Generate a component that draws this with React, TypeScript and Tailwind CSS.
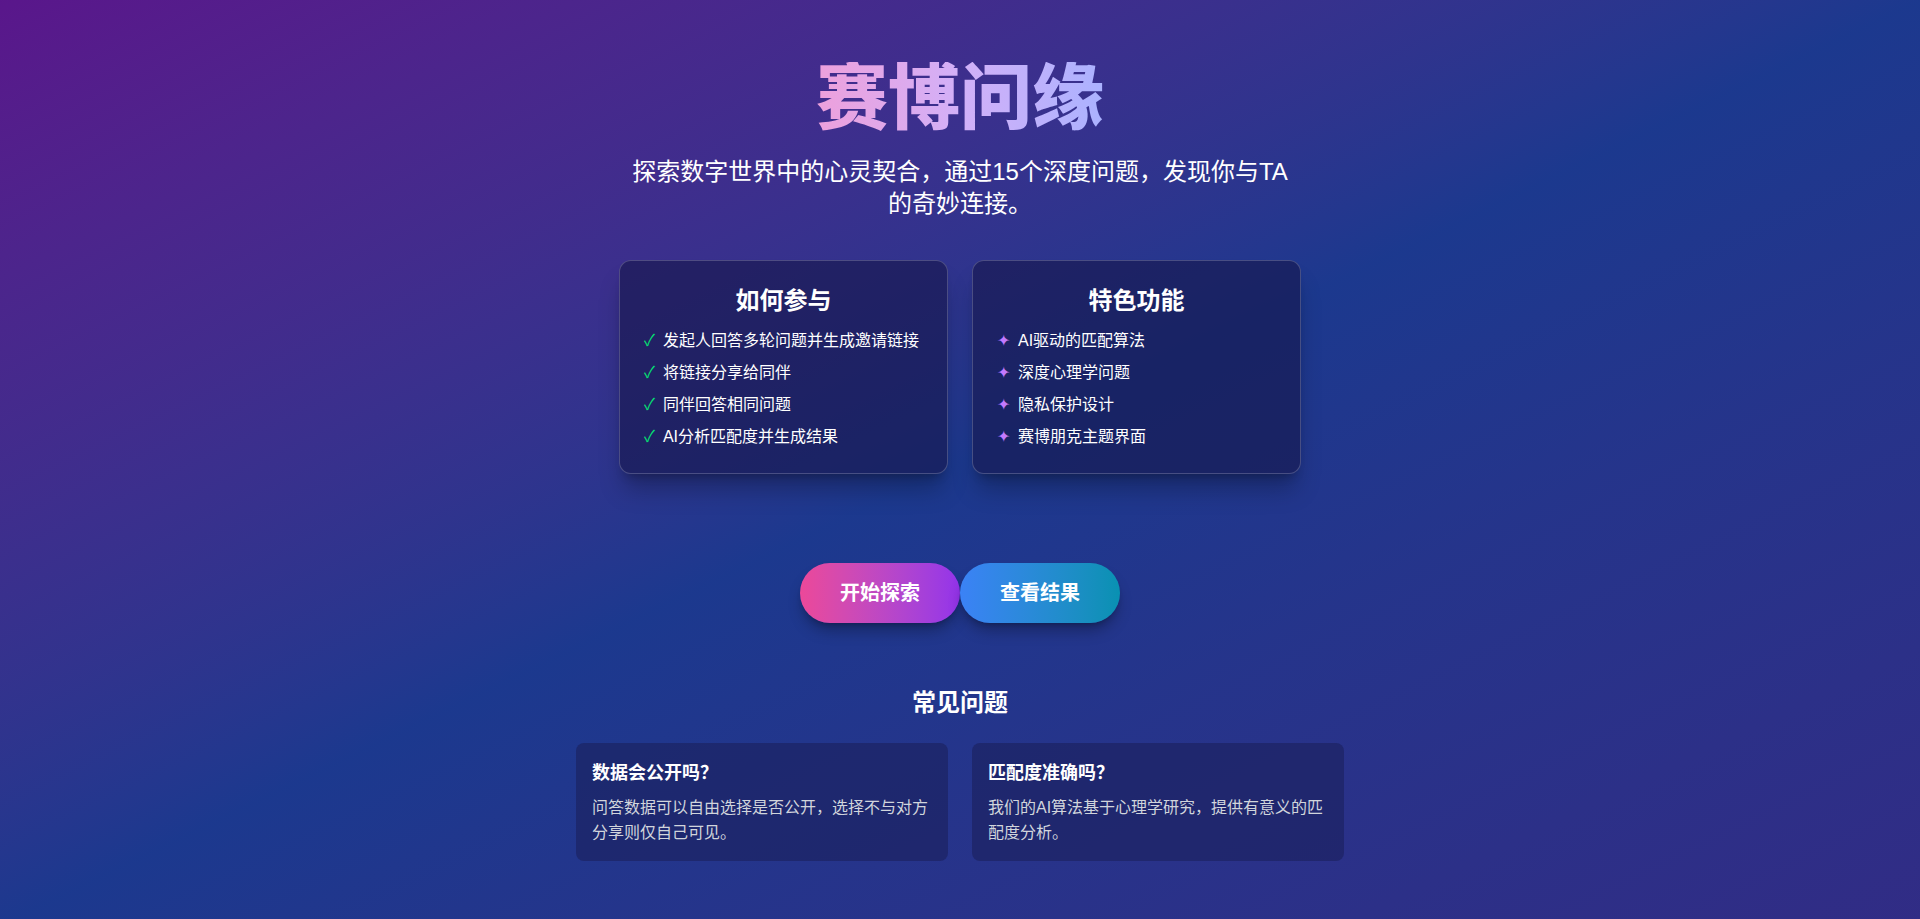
import React from 'react';

const steps = ['发起人回答多轮问题并生成邀请链接', '将链接分享给同伴', '同伴回答相同问题', 'AI分析匹配度并生成结果'];
const features = ['AI驱动的匹配算法', '深度心理学问题', '隐私保护设计', '赛博朋克主题界面'];
const faqs = [
  { q: '数据会公开吗？', a: '问答数据可以自由选择是否公开，选择不与对方分享则仅自己可见。' },
  { q: '匹配度准确吗？', a: '我们的AI算法基于心理学研究，提供有意义的匹配度分析。' },
];

const App = () => {
  return (
    <div
      className="min-h-screen w-full bg-linear-to-br from-purple-900 via-blue-900 to-indigo-900 text-white flex flex-col items-center pt-[62px] pb-16"
      style={{ fontFamily: '"Liberation Sans", "Noto Sans CJK SC", sans-serif' }}
    >
      <h1 className="text-7xl font-black leading-none bg-linear-to-r from-[#eda0dc] via-[#d2b0f8] to-[#aab2ff] bg-clip-text text-transparent">
        赛博问缘
      </h1>
      <p className="mt-[22px] max-w-2xl text-center text-2xl text-white">
        探索数字世界中的心灵契合，通过15个深度问题，发现你与TA的奇妙连接。
      </p>

      {/* Info cards */}
      <div className="mt-10 flex gap-6">
        <div className="w-[329px] rounded-xl border border-white/20 bg-[#15154a]/60 p-6 shadow-xl shadow-black/25">
          <h2 className="mb-3 text-center text-2xl font-bold">如何参与</h2>
          <ul className="space-y-2">
            {steps.map((s) => (
              <li key={s} className="flex items-center gap-2 text-base leading-6">
                <span className="text-green-400">✓</span>
                <span>{s}</span>
              </li>
            ))}
          </ul>
        </div>
        <div className="w-[329px] rounded-xl border border-white/20 bg-[#15154a]/60 p-6 shadow-xl shadow-black/25">
          <h2 className="mb-3 text-center text-2xl font-bold">特色功能</h2>
          <ul className="space-y-2">
            {features.map((s) => (
              <li key={s} className="flex items-center gap-2 text-base leading-6">
                <span className="text-purple-400">✦</span>
                <span>{s}</span>
              </li>
            ))}
          </ul>
        </div>
      </div>

      {/* Actions */}
      <div className="mt-[89px] flex">
        <button className="rounded-full bg-linear-to-r from-[#ec4899] to-[#9333ea] px-10 py-4 text-xl font-bold shadow-lg shadow-black/30">
          开始探索
        </button>
        <button className="rounded-full bg-linear-to-r from-[#3b82f6] to-[#0891b2] px-10 py-4 text-xl font-bold shadow-lg shadow-black/30">
          查看结果
        </button>
      </div>

      {/* FAQ */}
      <h2 className="mt-16 mb-6 text-2xl font-bold">常见问题</h2>
      <div className="grid w-full max-w-3xl grid-cols-2 gap-6">
        {faqs.map((f) => (
          <div key={f.q} className="rounded-lg bg-[#1a1f5c]/60 p-4">
            <h3 className="mb-2 text-lg font-bold">{f.q}</h3>
            <p className="text-base leading-[25px] text-gray-300">{f.a}</p>
          </div>
        ))}
      </div>
    </div>
  );
};

export default App;
